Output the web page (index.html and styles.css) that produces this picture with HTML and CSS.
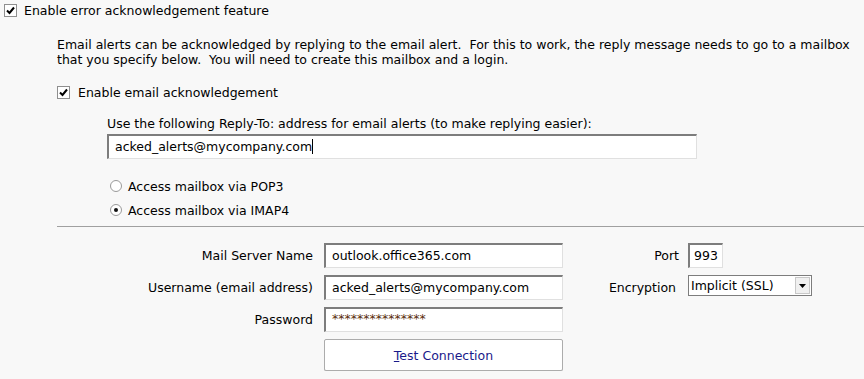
FILE: index.html
```html
<!DOCTYPE html>
<html lang="en">
<head>
  <meta charset="UTF-8" />
  <title>Error Acknowledgement</title>
  <link rel="stylesheet" href="styles.css">
</head>
<body>
  <div class="check-row top">
    <span class="box"><svg width="9" height="9" viewBox="0 0 9 9"><path d="M1 4.5 L3.5 7 L8 1.5" fill="none" stroke="#000" stroke-width="2"/></svg></span>
    <span>Enable error acknowledgement feature</span>
  </div>

  <div class="section">
    <p class="intro">Email alerts can be acknowledged by replying to the email alert.&nbsp; For this to work, the reply message needs to go to a mailbox<br>that you specify below.&nbsp; You will need to create this mailbox and a login.</p>

    <div class="check-row">
      <span class="box"><svg width="9" height="9" viewBox="0 0 9 9"><path d="M1 4.5 L3.5 7 L8 1.5" fill="none" stroke="#000" stroke-width="2"/></svg></span>
      <span>Enable email acknowledgement</span>
    </div>

    <div class="reply">
      <div class="reply-label">Use the following Reply-To: address for email alerts (to make replying easier):</div>
      <div class="field wide">acked_alerts@mycompany.com<span class="caret"></span></div>

      <div class="radio-row first"><span class="radio"></span>Access mailbox via POP3</div>
      <div class="radio-row"><span class="radio on"></span>Access mailbox via IMAP4</div>
    </div>

    <div class="rule"></div>

    <div class="server">
      <div class="lbl">Mail Server Name</div>
      <div class="field">outlook.office365.com</div>
      <div class="lbl right">Port</div>
      <div class="field port">993</div>

      <div class="lbl">Username (email address)</div>
      <div class="field">acked_alerts@mycompany.com</div>
      <div class="lbl right enc">Encryption</div>
      <div class="select"><span>Implicit (SSL)</span><span class="arrow"><svg width="7" height="4" viewBox="0 0 7 4"><path d="M0 0 H7 L3.5 4 Z" fill="#000"/></svg></span></div>

      <div class="lbl">Password</div>
      <div class="field pass">***************</div>
      <div></div>
      <div></div>

      <div></div>
      <button class="btn"><u>T</u>est Connection</button>
    </div>
  </div>
</body>
</html>
```

FILE: styles.css
```css
body {
  margin: 0;
  background: #f8f8f8;
  color: #000;
  font-family: "DejaVu Sans", Verdana, sans-serif;
  font-size: 12.5px;
}

.check-row { display: flex; align-items: center; gap: 7px; height: 16px; }
.check-row.top { margin: 2px 0 0 4px; }
.box {
  width: 11px; height: 11px; border: 1px solid #8f8f8f; background: #fff;
  display: flex; align-items: center; justify-content: center;
}

.section { padding-left: 57px; }
.intro { margin: 19px 0 0; line-height: 15px; }
.section .check-row { margin-top: 17px; gap: 8px; }

.reply { padding-left: 50px; }
.reply-label { margin-top: 16px; line-height: 16px; }
.field {
  box-sizing: border-box; height: 25px; background: #fff;
  border: 1px solid #e0e0e0; border-top: 2px solid #7d7d7d; border-left: 2px solid #7d7d7d;
  padding: 3px 0 0 6px; line-height: 16px;
}
.field.wide { width: 590px; margin: 2px 0 0; display: flex; }
.caret { width: 1px; height: 15px; background: #000; }

.radio-row { display: flex; align-items: center; gap: 6px; height: 16px; margin: 8px 0 0 3px; }
.radio-row.first { margin-top: 19px; }
.radio {
  box-sizing: border-box; width: 12px; height: 12px; border-radius: 50%;
  border: 1px solid #9a9a9a; background: #fff; position: relative;
}
.radio.on::after {
  content: ""; position: absolute; left: 3px; top: 3px;
  width: 4px; height: 4px; border-radius: 50%; background: #111;
}

.rule { margin: 8px 0 0; height: 1px; background: #a0a0a0; }

.server {
  display: grid;
  grid-template-columns: 267px 239px 125px auto;
  row-gap: 7px;
  margin-top: 16px;
  align-items: center;
}
.lbl { text-align: right; padding-right: 11px; }
.lbl.right { padding-right: 9px; }
.lbl.enc { padding-right: 12px; }
.field.port { width: 35px; padding-left: 4px; }
.field.pass { color: #5a2d0c; padding-top: 2px; }

.select {
  box-sizing: border-box; width: 124px; height: 21px; background: #fff;
  border: 1px solid #7d7d7d; display: flex; align-items: center; justify-content: space-between;
  padding-left: 2px; align-self: start;
}
.arrow {
  width: 15px; height: 17px; margin-right: 1px; box-sizing: border-box;
  border: 1px solid #c8c8c8; background: #f0f0f0;
  display: flex; align-items: center; justify-content: center;
}

.btn {
  grid-column: 2; height: 32px;
  background: #fff; border: 1px solid #acacac; border-radius: 2px;
  box-shadow: 0 1px 0 #d8d8d8;
  font: inherit; color: #1a1a8a; cursor: pointer;
}
```
